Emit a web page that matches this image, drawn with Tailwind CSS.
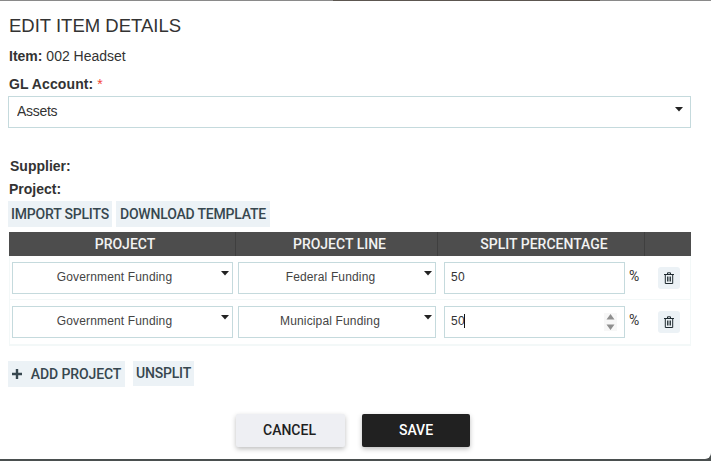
<!DOCTYPE html>
<html lang="en">
<head>
  <meta charset="UTF-8" />
  <title>Edit Item Details</title>
  <script src="https://cdn.jsdelivr.net/npm/@tailwindcss/browser@4"></script>
</head>
<body class="h-[461px] w-[711px] overflow-hidden bg-[#4a4f4f] font-['Liberation_Sans',sans-serif] text-[#333]">

  <div class="h-px bg-[#8a8a8a]"><div class="ml-[333px] h-px w-[267px] bg-[#5c5650]"></div></div>

  <!-- Modal -->
  <div class="h-[458px] w-[711px] rounded-br-md bg-white px-2">
    <h2 class="pl-px pt-[14px] text-[18.5px] leading-[22px] text-[#333]">EDIT ITEM DETAILS</h2>

    <p class="mt-[9px] pl-px text-[14px] leading-[20px]"><b>Item:</b> 002 Headset</p>

    <label class="mt-[8px] block pl-px text-[14px] font-bold leading-[20px] tracking-[0.1px]">GL Account: <span class="font-normal text-[#f44336]">*</span></label>
    <div class="relative mt-[2px] w-[683px]">
      <select class="block h-[32px] w-full appearance-none rounded-none border border-[#c5dadd] bg-white px-2 pb-px text-[14px] tracking-[-0.3px] text-[#333]">
        <option>Assets</option>
      </select>
      <svg class="absolute right-[8px] top-[11px]" width="8" height="5" viewBox="0 0 8 5"><path d="M0 0h8L4 4.5z" fill="#222"/></svg>
    </div>

    <p class="ml-[2px] mt-[28px] text-[14px] font-bold leading-[20px]">Supplier:</p>
    <p class="ml-px mt-[3px] text-[14px] font-bold leading-[20px]">Project:</p>

    <div class="mt-[2px] flex gap-1 font-['Roboto',sans-serif] text-[14px] font-medium tracking-[-0.2px] text-[#37474f]">
      <button class="h-[26px] w-[104px] bg-[#ecf2f6]">IMPORT SPLITS</button>
      <button class="h-[26px] w-[154px] bg-[#ecf2f6]">DOWNLOAD TEMPLATE</button>
    </div>

    <!-- Splits table -->
    <div class="ml-px mt-[5px] w-[682px] border-b-2 border-b-[#f3f8f8]">
      <div class="grid h-[24px] grid-cols-[227px_202px_207px_46px] bg-[#4d4d4d] text-center font-['Roboto',sans-serif] text-[14px] font-medium leading-[24px] text-[#f2f2f2]">
        <div class="border-r border-[#3f3f3f] pl-[6px]">PROJECT</div>
        <div class="border-r border-[#3f3f3f] pl-[6px]">PROJECT LINE</div>
        <div class="border-r border-[#3f3f3f] pl-[6px]">SPLIT PERCENTAGE</div>
        <div></div>
      </div>

      <div class="flex h-[44px] items-center border-x border-b border-[#f3f8f8] pl-[2px] pt-px">
        <div class="relative w-[221px]">
          <select class="block h-[32px] w-full appearance-none rounded-none border border-[#c5dadd] bg-white pb-[2px] pr-[16px] text-center text-[12px] tracking-[0.15px] text-[#444]">
            <option>Government Funding</option>
          </select>
          <svg class="absolute right-[4px] top-[9px]" width="8" height="5" viewBox="0 0 8 5"><path d="M0 0h8L4 4.5z" fill="#222"/></svg>
        </div>
        <div class="relative ml-[5px] w-[198px]">
          <select class="block h-[32px] w-full appearance-none rounded-none border border-[#c5dadd] bg-white pb-[2px] pr-[13px] text-center text-[12px] tracking-[0.15px] text-[#444]">
            <option>Federal Funding</option>
          </select>
          <svg class="absolute right-[4px] top-[9px]" width="8" height="5" viewBox="0 0 8 5"><path d="M0 0h8L4 4.5z" fill="#222"/></svg>
        </div>
        <input type="text" value="50" class="ml-[8px] h-[32px] w-[181px] rounded-none border border-[#c5dadd] bg-white px-[6px] pb-[2px] text-[12px] tracking-[0.3px] text-[#333]" />
        <span class="ml-[4px] w-[11px] pb-[3px] font-['Roboto',sans-serif] text-[14px]">%</span>
        <button class="ml-[18px] flex h-[22px] w-[22px] items-center justify-center rounded-[3px] bg-[#ecf2f6]">
          <svg width="10" height="12" viewBox="0 0 10 12" fill="none" stroke="#1f2a30"><path d="M0 2.500h10M3.500 2.500V.8h3v1.700M1.300 2.500V11.500h7.400V2.500" /><path d="M3.500 4.500v5M5 4.500v5M6.500 4.500v5" stroke-width=".9"/></svg>
        </button>
      </div>

      <div class="flex h-[44px] items-center border-x border-[#f3f8f8] pl-[2px]">
        <div class="relative w-[221px]">
          <select class="block h-[32px] w-full appearance-none rounded-none border border-[#c5dadd] bg-white pb-[2px] pr-[16px] text-center text-[12px] tracking-[0.15px] text-[#444]">
            <option>Government Funding</option>
          </select>
          <svg class="absolute right-[4px] top-[9px]" width="8" height="5" viewBox="0 0 8 5"><path d="M0 0h8L4 4.5z" fill="#222"/></svg>
        </div>
        <div class="relative ml-[5px] w-[198px]">
          <select class="block h-[32px] w-full appearance-none rounded-none border border-[#c5dadd] bg-white pb-[2px] pr-[14px] text-center text-[12px] tracking-[0.15px] text-[#444]">
            <option>Municipal Funding</option>
          </select>
          <svg class="absolute right-[4px] top-[9px]" width="8" height="5" viewBox="0 0 8 5"><path d="M0 0h8L4 4.5z" fill="#222"/></svg>
        </div>
        <div class="relative ml-[8px] w-[181px]">
          <input type="text" value="50" class="block h-[32px] w-full rounded-none border border-[#c5dadd] bg-white px-[6px] pb-[2px] text-[12px] tracking-[0.3px] text-[#333]" />
          <span class="absolute left-[20px] top-[8px] h-[14px] w-px bg-[#111]"></span>
          <svg class="absolute right-[8px] top-[7px]" width="13" height="18" viewBox="0 0 13 18"><path d="M0 0h13v18H0z" fill="#f7f7f7"/><path d="M2.500 6.500L6.500 1 10.500 6.500zM2.500 11.500L6.500 17 10.500 11.500z" fill="#8f8f8f"/></svg>
        </div>
        <span class="ml-[4px] w-[11px] pb-[3px] font-['Roboto',sans-serif] text-[14px]">%</span>
        <button class="ml-[18px] flex h-[22px] w-[22px] items-center justify-center rounded-[3px] bg-[#ecf2f6]">
          <svg width="10" height="12" viewBox="0 0 10 12" fill="none" stroke="#1f2a30"><path d="M0 2.500h10M3.500 2.500V.8h3v1.700M1.300 2.500V11.500h7.400V2.500" /><path d="M3.500 4.500v5M5 4.500v5M6.500 4.500v5" stroke-width=".9"/></svg>
        </button>
      </div>
    </div>

    <div class="mt-[15px] flex items-start gap-2 font-['Roboto',sans-serif] text-[14px] font-medium tracking-[-0.1px] text-[#37474f]">
      <button class="flex h-[26px] w-[117px] items-center justify-center gap-[9px] bg-[#ecf2f6]">
        <svg width="10" height="10" viewBox="0 0 10 10"><path d="M3.800 0h2.400v3.800H10v2.400H6.200V10H3.800V6.200H0V3.800h3.800z" fill="#37474f"/></svg>
        ADD PROJECT
      </button>
      <button class="h-[25px] w-[61px] bg-[#ecf2f6] tracking-[-0.2px]">UNSPLIT</button>
    </div>

    <div class="mt-[27px] flex justify-center gap-[17px] pr-[5px] font-['Roboto',sans-serif] text-[14px] font-medium">
      <button class="h-[33px] w-[109px] rounded-[2px] bg-[#eeeff3] pr-[2px] text-[#1f1f1f] shadow-[0_2px_5px_rgba(0,0,0,0.26)]">CANCEL</button>
      <button class="h-[33px] w-[108px] rounded-[2px] bg-[#212121] text-white shadow-[0_2px_5px_rgba(0,0,0,0.26)]">SAVE</button>
    </div>
  </div>

</body>
</html>
